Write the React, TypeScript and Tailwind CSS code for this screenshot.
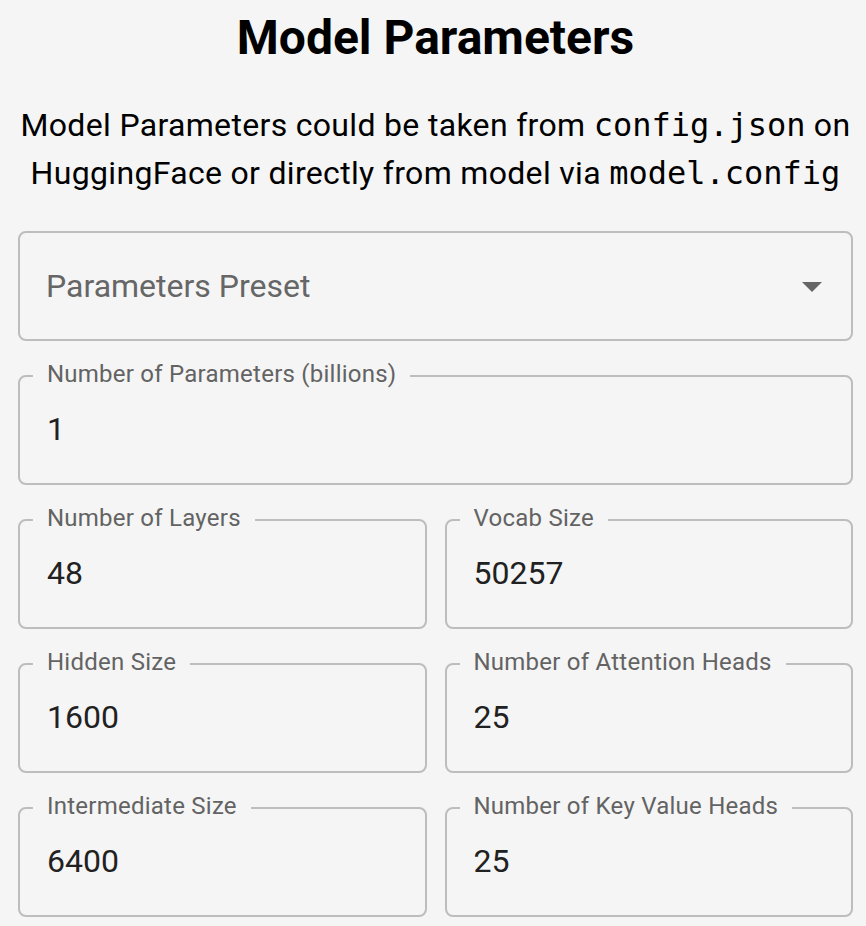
const fields: { label: string; value: string }[][] = [
  [{ label: 'Number of Parameters (billions)', value: '1' }],
  [
    { label: 'Number of Layers', value: '48' },
    { label: 'Vocab Size', value: '50257' },
  ],
  [
    { label: 'Hidden Size', value: '1600' },
    { label: 'Number of Attention Heads', value: '25' },
  ],
  [
    { label: 'Intermediate Size', value: '6400' },
    { label: 'Number of Key Value Heads', value: '25' },
  ],
];

function OutlinedField({ label, value }: { label: string; value: string }) {
  return (
    <fieldset className="min-w-0 h-[123px] border-2 border-[#bdbdbd] rounded-[8px]">
      <legend className="ml-[13px] px-[14px] pb-[4px] text-[24px] leading-[24px] tracking-[0.01em] text-[#636363]">
        {label}
      </legend>
      <div className="pl-[27px] pt-[21px] text-[32px] leading-[36px] text-[#212121]">{value}</div>
    </fieldset>
  );
}

export default function App() {
  return (
    <div className="min-h-screen bg-[#f5f5f5] pl-[18px] pr-[13px] pt-[10px] pb-[9px] font-['Roboto',sans-serif] text-black">
      <h1 className="text-center text-[48px] leading-[56px] font-bold">Model Parameters</h1>

      <p className="mt-[35px] text-center text-[32px] leading-[48px] tracking-[0.01em]">
        Model Parameters could be taken from{' '}
        <code className="font-['DejaVu_Sans_Mono',monospace] text-[32px] tracking-normal">config.json</code> on
        HuggingFace or directly from model via{' '}
        <code className="font-['DejaVu_Sans_Mono',monospace] text-[32px] tracking-normal">model.config</code>
      </p>

      <div className="mt-[34px] flex flex-col gap-[21px]">
        {/* Preset selector */}
        <div className="h-[110px] border-2 border-[#bdbdbd] rounded-[8px] flex items-center justify-between pl-[26px] pr-[29px]">
          <span className="text-[32px] leading-[36px] text-[#666666]">Parameters Preset</span>
          <svg width="20" height="10" viewBox="0 0 20 10" className="mt-[2px]">
            <path d="M0 0 L10 10 L20 0 Z" fill="#666666" />
          </svg>
        </div>

        {fields.map((row, i) => (
          <div key={i} className={row.length === 2 ? 'grid grid-cols-2 gap-x-[18px]' : 'grid grid-cols-1'}>
            {row.map((f) => (
              <OutlinedField key={f.label} label={f.label} value={f.value} />
            ))}
          </div>
        ))}
      </div>
    </div>
  );
}
